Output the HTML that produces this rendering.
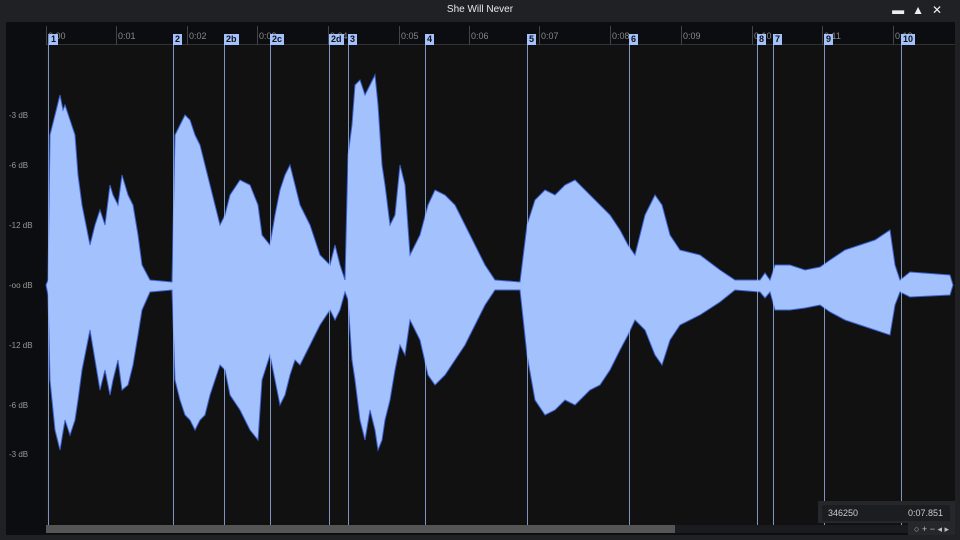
<!DOCTYPE html>
<html><head><style>
body{margin:0;width:960px;height:540px;background:#202124;font-family:"Liberation Sans",sans-serif;overflow:hidden;position:relative}
.t{position:absolute;font-size:9px;color:#888}
.lbl{position:absolute;top:34px;height:11px;background:#a3c1fc;color:#111;font-size:9px;line-height:11px;padding:0 2px;font-weight:bold}
.db{position:absolute;left:9px;font-size:8px;color:#999}
</style></head><body>
<div style="position:absolute;top:4px;width:960px;text-align:center;color:#e8e8e8;font-size:10px">She Will Never</div>
<div style="position:absolute;right:10px;top:3px;color:#eee;font-size:12px;letter-spacing:8px">▬▲✕</div>
<div style="position:absolute;left:6px;top:22px;width:949px;height:513px;background:#0c0d10"></div>
<div style="position:absolute;left:46px;top:45px;width:909px;height:480px;background:#111"></div>
<div style="position:absolute;left:46px;top:44px;width:909px;height:1px;background:#333"></div>
<div style="position:absolute;left:46px;top:525px;width:909px;height:8px;background:#1a1b1e"></div>
<div style="position:absolute;left:46px;top:525px;width:629px;height:8px;background:#555"></div>
<svg style="position:absolute;left:0;top:0" width="960" height="540">
<g stroke="#444" stroke-width="1">
<line x1="46.5" y1="26" x2="46.5" y2="45"/><line x1="116.5" y1="26" x2="116.5" y2="45"/><line x1="187.5" y1="26" x2="187.5" y2="45"/><line x1="257.5" y1="26" x2="257.5" y2="45"/><line x1="328.5" y1="26" x2="328.5" y2="45"/><line x1="399.5" y1="26" x2="399.5" y2="45"/><line x1="469.5" y1="26" x2="469.5" y2="45"/><line x1="539.5" y1="26" x2="539.5" y2="45"/><line x1="610.5" y1="26" x2="610.5" y2="45"/><line x1="681.5" y1="26" x2="681.5" y2="45"/><line x1="752.5" y1="26" x2="752.5" y2="45"/><line x1="822.5" y1="26" x2="822.5" y2="45"/><line x1="893.5" y1="26" x2="893.5" y2="45"/>
</g>
<polygon fill="#a3c1fc" stroke="#3d63d6" stroke-width="1" points="46,285 48,280 50,135 55,115 60,95 63,110 65,105 70,120 75,135 78,175 82,205 90,245 95,225 100,210 105,225 110,185 113,195 118,205 122,175 128,195 133,205 138,235 142,265 150,280 172,282 175,135 180,125 185,115 190,120 195,135 200,145 205,165 210,185 215,205 220,225 225,215 230,195 240,180 250,185 258,205 262,235 270,245 275,215 280,190 285,175 290,165 295,185 300,205 310,225 320,255 330,265 335,245 340,265 345,280 348,155 352,125 355,85 360,80 365,95 370,85 375,75 378,105 382,165 385,185 390,225 395,215 400,165 405,185 410,255 420,235 428,205 435,190 445,195 455,205 465,225 475,245 485,265 495,280 520,282 527,225 535,200 545,190 555,195 565,185 575,180 590,195 600,205 610,215 620,230 628,245 635,255 645,215 655,195 662,205 670,235 680,250 700,255 720,270 735,280 760,280 765,273 770,280 775,265 790,265 805,270 820,267 830,260 845,250 860,245 875,240 890,230 895,265 900,280 910,272 950,275 953,285 950,295 910,297 900,292 895,305 890,335 875,330 860,325 845,320 830,312 820,305 805,308 790,310 775,310 770,292 765,298 760,292 735,290 720,302 700,315 680,325 670,340 662,365 655,355 645,330 635,320 628,335 620,350 610,370 600,385 590,390 575,405 565,400 555,410 545,415 535,400 527,355 520,290 495,290 485,305 475,325 465,345 455,360 445,375 435,385 428,375 420,340 410,320 405,355 400,345 395,370 390,400 385,420 382,440 378,450 375,430 370,410 365,440 360,420 355,380 352,360 348,300 345,292 340,310 335,320 330,310 320,325 310,345 300,365 295,360 290,375 285,395 280,405 275,380 270,355 262,380 258,440 250,430 240,410 230,395 225,370 220,365 215,380 210,395 205,415 200,420 195,430 190,420 185,415 180,400 175,380 172,290 150,292 142,310 138,335 133,365 128,385 122,390 118,360 113,380 110,395 105,370 100,390 95,360 90,330 82,370 78,400 75,420 70,435 65,420 60,450 55,430 50,380 48,295"/>
<g stroke="#a3c1fc" stroke-width="1" opacity="0.75">
<line x1="48.5" y1="34" x2="48.5" y2="525"/><line x1="173.5" y1="34" x2="173.5" y2="525"/><line x1="224.5" y1="34" x2="224.5" y2="525"/><line x1="270.5" y1="34" x2="270.5" y2="525"/><line x1="329.5" y1="34" x2="329.5" y2="525"/><line x1="348.5" y1="34" x2="348.5" y2="525"/><line x1="425.5" y1="34" x2="425.5" y2="525"/><line x1="527.5" y1="34" x2="527.5" y2="525"/><line x1="629.5" y1="34" x2="629.5" y2="525"/><line x1="757.5" y1="34" x2="757.5" y2="525"/><line x1="773.5" y1="34" x2="773.5" y2="525"/><line x1="824.5" y1="34" x2="824.5" y2="525"/><line x1="901.5" y1="34" x2="901.5" y2="525"/>
</g>
</svg>
<div class="t" style="left:48px;top:31px">0:00</div><div class="t" style="left:118px;top:31px">0:01</div><div class="t" style="left:189px;top:31px">0:02</div><div class="t" style="left:259px;top:31px">0:03</div><div class="t" style="left:330px;top:31px">0:04</div><div class="t" style="left:401px;top:31px">0:05</div><div class="t" style="left:471px;top:31px">0:06</div><div class="t" style="left:541px;top:31px">0:07</div><div class="t" style="left:612px;top:31px">0:08</div><div class="t" style="left:683px;top:31px">0:09</div><div class="t" style="left:754px;top:31px">0:10</div><div class="t" style="left:824px;top:31px">0:11</div><div class="t" style="left:895px;top:31px">0:12</div>
<div class="lbl" style="left:49px">1</div><div class="lbl" style="left:173px">2</div><div class="lbl" style="left:224px">2b</div><div class="lbl" style="left:270px">2c</div><div class="lbl" style="left:329px">2d</div><div class="lbl" style="left:348px">3</div><div class="lbl" style="left:425px">4</div><div class="lbl" style="left:527px">5</div><div class="lbl" style="left:629px">6</div><div class="lbl" style="left:757px">8</div><div class="lbl" style="left:773px">7</div><div class="lbl" style="left:824px">9</div><div class="lbl" style="left:901px">10</div>
<div class="db" style="top:111px">-3 dB</div><div class="db" style="top:161px">-6 dB</div><div class="db" style="top:221px">-12 dB</div><div class="db" style="top:281px">-oo dB</div><div class="db" style="top:341px">-12 dB</div><div class="db" style="top:401px">-6 dB</div><div class="db" style="top:450px">-3 dB</div>
<div style="position:absolute;left:818px;top:501px;width:137px;height:22px;background:#26272b"></div>
<div style="position:absolute;left:822px;top:505px;width:128px;height:16px;background:#1c1d20;color:#ccc;font-size:9px;line-height:16px">
<span style="position:absolute;left:6px">346250</span><span style="position:absolute;right:7px">0:07.851</span></div>
<div style="position:absolute;left:908px;top:523px;width:47px;height:12px;background:#26272b;color:#bbb;font-size:9px;line-height:12px;text-align:center">○ + − ◂ ▸</div>
</body></html>
